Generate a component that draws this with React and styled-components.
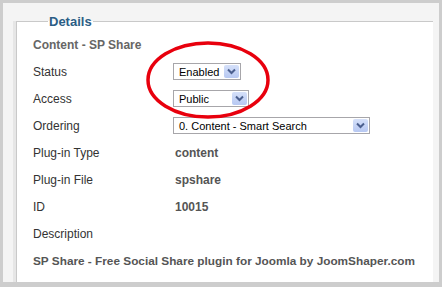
import React from 'react'
import styled, { createGlobalStyle } from 'styled-components'

const GlobalStyle = createGlobalStyle`
  html, body {
    margin: 0;
    padding: 0;
    background: #fff;
  }
  body {
    font-family: 'Liberation Sans', Arial, sans-serif;
  }
`

const Frame = styled.div`
  position: relative;
  box-sizing: border-box;
  width: 442px;
  height: 287px;
  border: 3px solid #cdcdcd;
  border-bottom-width: 5px;
  background: #f4f4f4;
  padding: 11px 6px 0 13px;
  overflow: hidden;
`

const Fieldset = styled.fieldset`
  box-sizing: border-box;
  margin: 0;
  height: calc(100% + 10px);
  padding: 2px 0 0 16px;
  border: 1px solid #c9c9c9;
  border-right: none;
  border-bottom: none;
  background: #fff;
  box-shadow: -3px 0 0 #e6e6e6;
`

const Legend = styled.legend`
  padding: 0 1px;
  margin-left: 15px;
  font-size: 13px;
  line-height: 15px;
  font-weight: bold;
  color: #2b5e86;
`

const Grid = styled.div`
  display: grid;
  grid-template-columns: 140px 1fr;
  grid-auto-rows: 27px;
  align-items: center;
  font-size: 12px;
  color: #333;
`

const Title = styled.div`
  grid-column: 1 / -1;
  font-weight: bold;
  font-size: ${(p) => p.$size || 12}px;
  color: ${(p) => p.$color || '#666'};
  white-space: nowrap;
`

const Label = styled.div``

const Value = styled.div`
  font-weight: bold;
  color: #555;
  padding-left: 2px;
`

const Select = styled.div`
  box-sizing: border-box;
  display: flex;
  align-items: center;
  justify-content: space-between;
  width: ${(p) => p.$width}px;
  height: 17px;
  border: 1px solid #a7a6aa;
  background: #fff;
  padding: 0 1px 0 5px;
  font-size: 11px;
  color: #000;
`

const Arrow = styled.span`
  display: flex;
  align-items: center;
  justify-content: center;
  width: 15px;
  height: 13px;
  background: linear-gradient(#d5e0f9, #b7c8f2);
  border-radius: 2px;
`

const Ring = styled.svg`
  position: absolute;
  left: -3px;
  top: -3px;
  pointer-events: none;
`

const Chevron = () => (
  <svg width='9' height='7' viewBox='0 0 9 7'>
    <path d='M1 1.5 L4.5 5 L8 1.5' fill='none' stroke='#4b5f8e' strokeWidth='2' />
  </svg>
)

const Dropdown = ({ width, children }) => (
  <Select $width={width}>
    <span>{children}</span>
    <Arrow>
      <Chevron />
    </Arrow>
  </Select>
)

const App = () => {
  return (
    <>
      <GlobalStyle />
      <Frame>
        <Fieldset>
          <Legend>Details</Legend>
          <Grid>
            <Title>Content - SP Share</Title>
            <Label>Status</Label>
            <div>
              <Dropdown width={68}>Enabled</Dropdown>
            </div>
            <Label>Access</Label>
            <div>
              <Dropdown width={76}>Public</Dropdown>
            </div>
            <Label>Ordering</Label>
            <div>
              <Dropdown width={197}>0. Content - Smart Search</Dropdown>
            </div>
            <Label>Plug-in Type</Label>
            <Value>content</Value>
            <Label>Plug-in File</Label>
            <Value>spshare</Value>
            <Label>ID</Label>
            <Value>10015</Value>
            <Label>Description</Label>
            <div />
            <Title $color='#555' $size={11.8}>
              SP Share - Free Social Share plugin for Joomla by JoomShaper.com
            </Title>
          </Grid>
        </Fieldset>
        <Ring width='442' height='287'>
          <ellipse cx='208' cy='80' rx='60' ry='37' fill='none' stroke='#e8000d' strokeWidth='3.5' />
        </Ring>
      </Frame>
    </>
  )
}

export default App
